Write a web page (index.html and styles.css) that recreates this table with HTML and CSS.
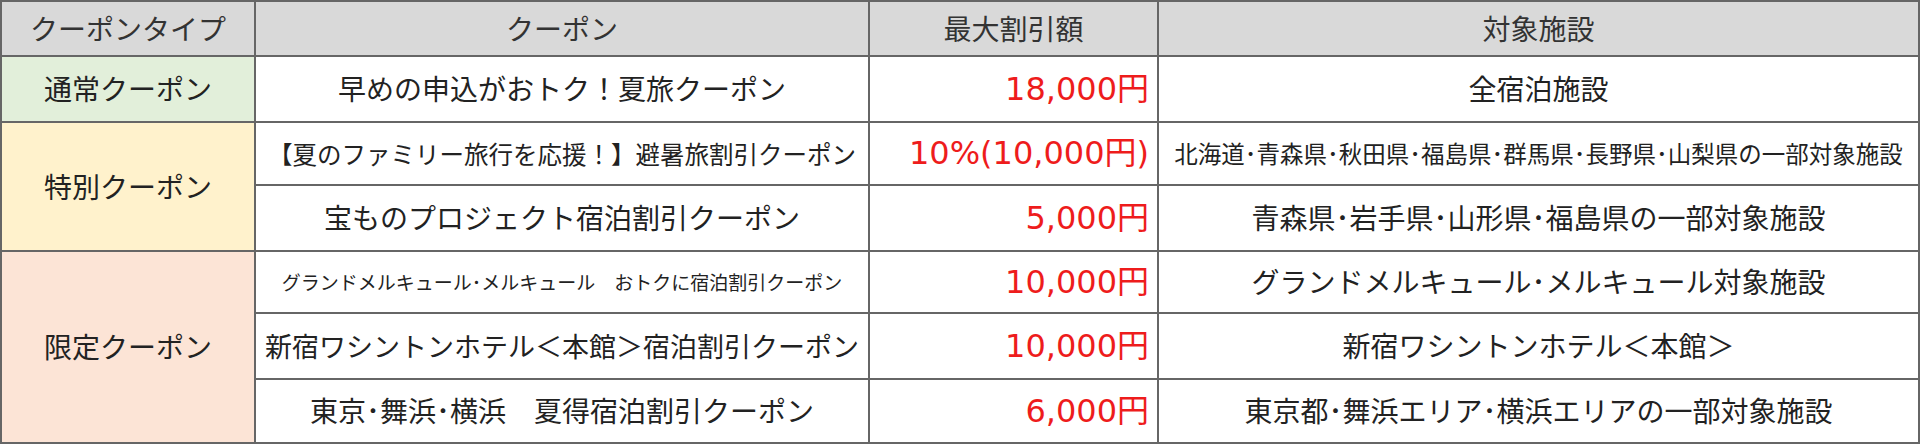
FILE: index.html
```html
<!DOCTYPE html>
<html lang="ja">
<head>
<meta charset="utf-8">
<title>クーポン一覧</title>
<link rel="stylesheet" href="styles.css">
</head>
<body>
<table class="coupons">
  <colgroup>
    <col class="c-type"><col class="c-name"><col class="c-amt"><col class="c-fac">
  </colgroup>
  <thead>
    <tr class="r-head"><th>クーポンタイプ</th><th>クーポン</th><th>最大割引額</th><th>対象施設</th></tr>
  </thead>
  <tbody>
    <tr class="r-tall">
      <td class="type normal">通常クーポン</td>
      <td class="name">早めの申込がおトク！夏旅クーポン</td>
      <td class="amt">18,000円</td>
      <td class="fac">全宿泊施設</td>
    </tr>
    <tr class="r-mid">
      <td class="type special" rowspan="2">特別クーポン</td>
      <td class="name sm">【夏のファミリー旅行を応援！】避暑旅割引クーポン</td>
      <td class="amt">10%(10,000円)</td>
      <td class="fac sm">北海道･青森県･秋田県･福島県･群馬県･長野県･山梨県の一部対象施設</td>
    </tr>
    <tr class="r-tall">
      <td class="name">宝ものプロジェクト宿泊割引クーポン</td>
      <td class="amt">5,000円</td>
      <td class="fac">青森県･岩手県･山形県･福島県の一部対象施設</td>
    </tr>
    <tr class="r-short">
      <td class="type limited" rowspan="3">限定クーポン</td>
      <td class="name xs">グランドメルキュール･メルキュール　おトクに宿泊割引クーポン</td>
      <td class="amt">10,000円</td>
      <td class="fac">グランドメルキュール･メルキュール対象施設</td>
    </tr>
    <tr class="r-tall">
      <td class="name md">新宿ワシントンホテル＜本館＞宿泊割引クーポン</td>
      <td class="amt">10,000円</td>
      <td class="fac">新宿ワシントンホテル＜本館＞</td>
    </tr>
    <tr class="r-last">
      <td class="name">東京･舞浜･横浜　夏得宿泊割引クーポン</td>
      <td class="amt">6,000円</td>
      <td class="fac">東京都･舞浜エリア･横浜エリアの一部対象施設</td>
    </tr>
  </tbody>
</table>
</body>
</html>
```
FILE: styles.css
```css
html, body {
  margin: 0;
  padding: 0;
  background: #ffffff;
}

body {
  font-family: "Noto Sans CJK JP", "Noto Sans", sans-serif;
  color: #222222;
}

.coupons {
  border-collapse: collapse;
  table-layout: fixed;
  width: 1918px;
}

.c-type { width: 254px; }
.c-name { width: 614px; }
.c-amt  { width: 289px; }
.c-fac  { width: 761px; }

.coupons th,
.coupons td {
  border: 2px solid #666666;
  padding: 0;
  text-align: center;
  vertical-align: middle;
  font-size: 28px;
  font-weight: 400;
  line-height: 1.2;
  white-space: nowrap;
}

.r-head { height: 55px; }
.r-tall { height: 66px; }
.r-mid { height: 63px; }
.r-short { height: 62px; }
.r-last { height: 64px; }

.coupons th {
  background: #d9d9d9;
  color: #333333;
}

.type.normal { background: #e2efda; }
.type.special { background: #fff2cc; }
.type.limited { background: #fce4d6; }

.name.sm { font-size: 24.5px; }
.name.xs { font-size: 19px; }
.name.md { font-size: 27px; }
.fac.sm { font-size: 23.5px; }

.coupons td.amt {
  font-family: "DejaVu Sans", "Noto Sans CJK JP", sans-serif;
  font-size: 32px;
  color: #ee1c1c;
  text-align: right;
  padding-right: 8px;
}
```
